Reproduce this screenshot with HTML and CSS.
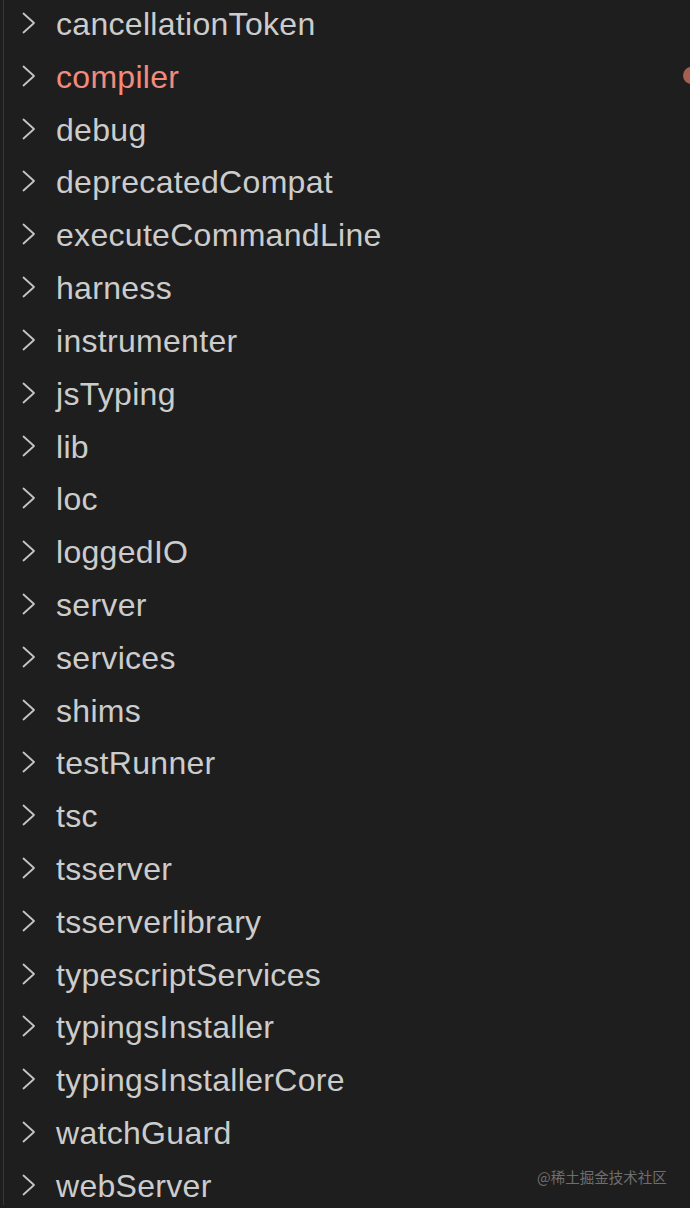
FILE: index.html
```html
<!DOCTYPE html>
<html>
<head>
<meta charset="utf-8">
<link rel="stylesheet" href="styles.css">
</head>
<body>
<div class="explorer">
  <div class="guide">
    <ul class="tree">
      <li class="row"><svg class="chev" viewBox="0 0 14 22"><path d="M1.5 1.5 L12 11 L1.5 20.5"/></svg><span class="name">cancellationToken</span></li>
      <li class="row modified"><svg class="chev" viewBox="0 0 14 22"><path d="M1.5 1.5 L12 11 L1.5 20.5"/></svg><span class="name">compiler</span><span class="dot"></span></li>
      <li class="row"><svg class="chev" viewBox="0 0 14 22"><path d="M1.5 1.5 L12 11 L1.5 20.5"/></svg><span class="name">debug</span></li>
      <li class="row"><svg class="chev" viewBox="0 0 14 22"><path d="M1.5 1.5 L12 11 L1.5 20.5"/></svg><span class="name">deprecatedCompat</span></li>
      <li class="row"><svg class="chev" viewBox="0 0 14 22"><path d="M1.5 1.5 L12 11 L1.5 20.5"/></svg><span class="name">executeCommandLine</span></li>
      <li class="row"><svg class="chev" viewBox="0 0 14 22"><path d="M1.5 1.5 L12 11 L1.5 20.5"/></svg><span class="name">harness</span></li>
      <li class="row"><svg class="chev" viewBox="0 0 14 22"><path d="M1.5 1.5 L12 11 L1.5 20.5"/></svg><span class="name">instrumenter</span></li>
      <li class="row"><svg class="chev" viewBox="0 0 14 22"><path d="M1.5 1.5 L12 11 L1.5 20.5"/></svg><span class="name">jsTyping</span></li>
      <li class="row"><svg class="chev" viewBox="0 0 14 22"><path d="M1.5 1.5 L12 11 L1.5 20.5"/></svg><span class="name">lib</span></li>
      <li class="row"><svg class="chev" viewBox="0 0 14 22"><path d="M1.5 1.5 L12 11 L1.5 20.5"/></svg><span class="name">loc</span></li>
      <li class="row"><svg class="chev" viewBox="0 0 14 22"><path d="M1.5 1.5 L12 11 L1.5 20.5"/></svg><span class="name">loggedIO</span></li>
      <li class="row"><svg class="chev" viewBox="0 0 14 22"><path d="M1.5 1.5 L12 11 L1.5 20.5"/></svg><span class="name">server</span></li>
      <li class="row"><svg class="chev" viewBox="0 0 14 22"><path d="M1.5 1.5 L12 11 L1.5 20.5"/></svg><span class="name">services</span></li>
      <li class="row"><svg class="chev" viewBox="0 0 14 22"><path d="M1.5 1.5 L12 11 L1.5 20.5"/></svg><span class="name">shims</span></li>
      <li class="row"><svg class="chev" viewBox="0 0 14 22"><path d="M1.5 1.5 L12 11 L1.5 20.5"/></svg><span class="name">testRunner</span></li>
      <li class="row"><svg class="chev" viewBox="0 0 14 22"><path d="M1.5 1.5 L12 11 L1.5 20.5"/></svg><span class="name">tsc</span></li>
      <li class="row"><svg class="chev" viewBox="0 0 14 22"><path d="M1.5 1.5 L12 11 L1.5 20.5"/></svg><span class="name">tsserver</span></li>
      <li class="row"><svg class="chev" viewBox="0 0 14 22"><path d="M1.5 1.5 L12 11 L1.5 20.5"/></svg><span class="name">tsserverlibrary</span></li>
      <li class="row"><svg class="chev" viewBox="0 0 14 22"><path d="M1.5 1.5 L12 11 L1.5 20.5"/></svg><span class="name">typescriptServices</span></li>
      <li class="row"><svg class="chev" viewBox="0 0 14 22"><path d="M1.5 1.5 L12 11 L1.5 20.5"/></svg><span class="name">typingsInstaller</span></li>
      <li class="row"><svg class="chev" viewBox="0 0 14 22"><path d="M1.5 1.5 L12 11 L1.5 20.5"/></svg><span class="name">typingsInstallerCore</span></li>
      <li class="row"><svg class="chev" viewBox="0 0 14 22"><path d="M1.5 1.5 L12 11 L1.5 20.5"/></svg><span class="name">watchGuard</span></li>
      <li class="row"><svg class="chev" viewBox="0 0 14 22"><path d="M1.5 1.5 L12 11 L1.5 20.5"/></svg><span class="name">webServer</span></li>
    </ul>
  </div>
  <div class="watermark">@稀土掘金技术社区</div>
</div>
</body>
</html>
```
FILE: styles.css
```css
html, body {
  margin: 0;
  padding: 0;
  background: #1e1e1e;
}
.explorer {
  position: relative;
  width: 690px;
  height: 1208px;
  overflow: hidden;
  padding-left: 3px;
  box-sizing: border-box;
  background: #1e1e1e;
}
.guide {
  border-left: 1px solid #383838;
  height: 100%;
}
.tree {
  list-style: none;
  margin: -3.4px 0 0 0;
  padding: 0;
}
.row {
  display: flex;
  align-items: center;
  height: 52.82px;
  font-family: "Liberation Sans", Arial, sans-serif;
  font-size: 32px;
  letter-spacing: 0.3px;
  color: #cccccc;
  position: relative;
}
.chev {
  width: 14px;
  height: 22px;
  margin-left: 18px;
  margin-right: 20px;
  flex: none;
}
.chev path {
  fill: none;
  stroke: #c5c5c5;
  stroke-width: 1.8;
  stroke-linecap: round;
  stroke-linejoin: round;
}
.name {
  white-space: nowrap;
  line-height: 1;
  transform: translateY(1px);
}
.modified .name {
  color: #f28b7c;
}
.dot {
  position: absolute;
  right: -10px;
  top: 50%;
  width: 17px;
  height: 17px;
  margin-top: -8.5px;
  border-radius: 50%;
  background: #a65e50;
}
.watermark {
  position: absolute;
  left: 537px;
  top: 1166px;
  font-family: "Noto Sans CJK SC", "Liberation Sans", sans-serif;
  font-size: 14.5px;
  color: #6e6e6e;
  white-space: nowrap;
}
```
